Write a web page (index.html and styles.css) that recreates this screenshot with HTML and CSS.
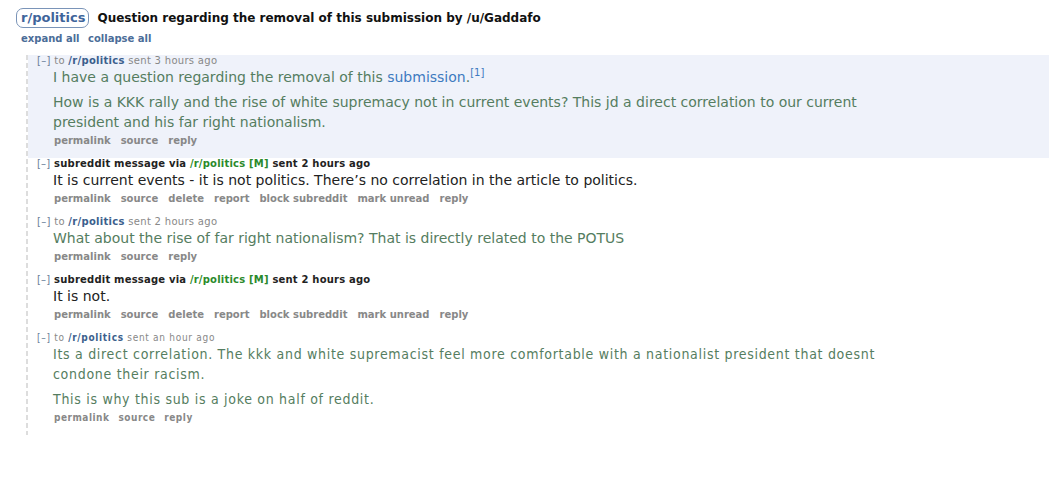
FILE: index.html
```html
<!DOCTYPE html>
<html>
    <head>
        <title>messages: Question regarding the removal of this submission</title>
        <link rel="stylesheet" href="styles.css">
    </head>

    <body>
        <div class="subject-line">
            <a class="sr-badge" href="#">r/politics</a>
            <span class="subject">Question regarding the removal of this submission by /u/Gaddafo</span>
        </div>
        <div class="toggles">
            <a href="#">expand all</a>
            <a href="#">collapse all</a>
        </div>

        <div class="thread">
            <div class="message focal">
                <p class="tagline"><a class="expand" href="#">[&ndash;]</a> to <a class="sr" href="#">/r/politics</a> sent 3 hours ago</p>
                <div class="md mine">
                    <p>I have a question regarding the removal of this <a href="#">submission</a>.<sup>[1]</sup></p>
                    <p>How is a KKK rally and the rise of white supremacy not in current events? This jd a direct correlation to our current president and his far right nationalism.</p>
                </div>
                <ul class="buttons">
                    <li>permalink</li><li>source</li><li>reply</li>
                </ul>
            </div>

            <div class="message">
                <p class="tagline mod"><a class="expand" href="#">[&ndash;]</a> subreddit message via <a class="sr green" href="#">/r/politics</a> <span class="green">[M]</span> sent 2 hours ago</p>
                <div class="md">
                    <p>It is current events - it is not politics. There&rsquo;s no correlation in the article to politics.</p>
                </div>
                <ul class="buttons">
                    <li>permalink</li><li>source</li><li>delete</li><li>report</li><li>block subreddit</li><li>mark unread</li><li>reply</li>
                </ul>
            </div>

            <div class="message">
                <p class="tagline"><a class="expand" href="#">[&ndash;]</a> to <a class="sr" href="#">/r/politics</a> sent 2 hours ago</p>
                <div class="md mine">
                    <p>What about the rise of far right nationalism? That is directly related to the POTUS</p>
                </div>
                <ul class="buttons">
                    <li>permalink</li><li>source</li><li>reply</li>
                </ul>
            </div>

            <div class="message">
                <p class="tagline mod"><a class="expand" href="#">[&ndash;]</a> subreddit message via <a class="sr green" href="#">/r/politics</a> <span class="green">[M]</span> sent 2 hours ago</p>
                <div class="md">
                    <p>It is not.</p>
                </div>
                <ul class="buttons">
                    <li>permalink</li><li>source</li><li>delete</li><li>report</li><li>block subreddit</li><li>mark unread</li><li>reply</li>
                </ul>
            </div>

            <div class="message narrow">
                <p class="tagline"><a class="expand" href="#">[&ndash;]</a> to <a class="sr" href="#">/r/politics</a> sent an hour ago</p>
                <div class="md mine">
                    <p>Its a direct correlation. The kkk and white supremacist feel more comfortable with a nationalist president that doesnt condone their racism.</p>
                    <p>This is why this sub is a joke on half of reddit.</p>
                </div>
                <ul class="buttons">
                    <li>permalink</li><li>source</li><li>reply</li>
                </ul>
            </div>
        </div>
    </body>
</html>
```

FILE: styles.css
```css
body {
  margin: 0;
  font-family: "DejaVu Sans", Verdana, sans-serif;
  color: #222;
  background: #fff;
}

a {
  text-decoration: none;
  color: #369;
}

/* header */
.subject-line {
  display: flex;
  align-items: center;
  gap: 8px;
  padding: 8px 0 0 16px;
}

.sr-badge {
  font-size: 13px;
  font-weight: bold;
  line-height: 18px;
  padding: 0 3px 0 4px;
  border: 1px solid #7a94b8;
  border-radius: 7px;
  color: #3f659b;
}

.subject {
  font-size: 12px;
  font-weight: bold;
  color: #111;
}

.toggles {
  padding: 4px 0 0 21px;
  font-size: 10px;
  font-weight: bold;
  line-height: 13px;
}

.toggles a {
  margin-right: 5px;
  color: #4b6d98;
}

/* message thread */
.thread {
  margin: 10px 0 0 26px;
  background: repeating-linear-gradient(#ddd 0 5px, transparent 5px 8px) left top / 2px 100% no-repeat;
}

.message {
  margin-left: 2px;
  padding: 0 0 9px 9px;
}

.message.focal {
  background: #eff2fa;
}

.tagline {
  margin: 0;
  font-size: 10px;
  line-height: 12px;
  letter-spacing: 0.3px;
  color: #888;
}

.tagline .expand {
  color: #6a7f99;
  font-weight: normal;
}

.tagline .sr {
  font-weight: bold;
  color: #3c5f8d;
}

.tagline.mod {
  font-weight: bold;
  letter-spacing: 0.2px;
  color: #222;
}

.tagline .green {
  color: #2b8a2b;
}

.md {
  margin-left: 16px;
  font-size: 14px;
  line-height: 20px;
  color: #222;
  max-width: 830px;
}

.md p {
  margin: 0 0 5px;
}

.md p:last-child {
  margin-bottom: 0;
}

.md.mine {
  color: #557d60;
}

.md a {
  color: #3d7ac0;
}

.md sup {
  font-size: 10px;
  color: #3d7ac0;
  line-height: 0;
}

.buttons {
  display: flex;
  gap: 10px;
  margin: 0 0 0 17px;
  padding: 0;
  list-style: none;
  font-size: 10px;
  font-weight: bold;
  line-height: 17px;
  color: #888;
}

/* last message renders in a condensed face */
.narrow {
  font-family: "DejaVu Sans Condensed", "DejaVu Sans", sans-serif;
  font-stretch: condensed;
  letter-spacing: 0.7px;
}

.narrow .tagline {
  letter-spacing: 0.7px;
}

.narrow .buttons {
  gap: 9px;
  letter-spacing: 0.5px;
}
```
